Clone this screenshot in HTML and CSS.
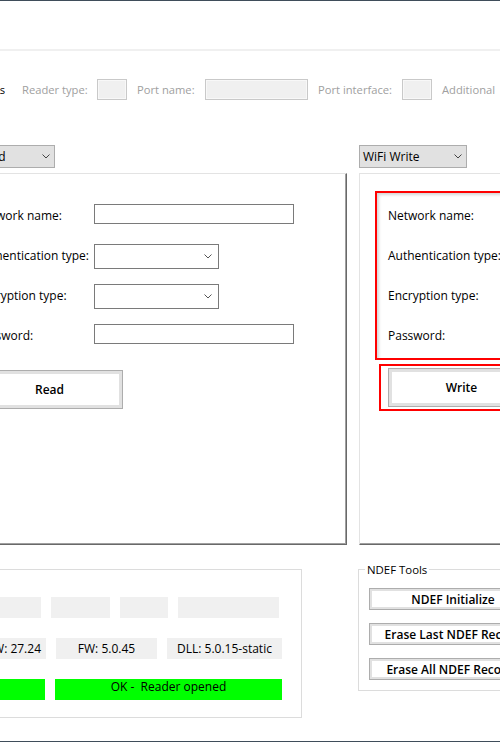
FILE: index.html
```html
<!DOCTYPE html>
<html>
<head>
<meta charset="utf-8">
<title>WiFi NDEF</title>
<link rel="stylesheet" href="styles.css">
</head>
<body>
<div class="window">
  <div class="strip"></div>

  <div class="readerbar">
    <div class="sclip"><span>Readers</span></div>
    <span class="rl rl-type">Reader type:</span><span class="rbox rbox-s"></span>
    <span class="rl rl-port">Port name:</span><span class="rbox rbox-l"></span>
    <span class="rl rl-intf">Port interface:</span><span class="rbox rbox-s"></span>
    <span class="rl">Additional</span>
  </div>

  <div class="main">
    <div class="col">
      <div class="combo"><span>WiFi Read</span><svg class="chev" width="8" height="5" viewBox="0 0 8 5"><path d="M0.5 0.5 L4 4 L7.5 0.5" fill="none" stroke="#444" stroke-width="1"/></svg></div>
      <div class="panel">
        <div class="form">
          <div class="row"><span class="label">Network name:</span><span class="input"></span></div>
          <div class="row"><span class="label">Authentication type:</span><span class="dd"><svg class="chev" width="8" height="5" viewBox="0 0 8 5"><path d="M0.5 0.5 L4 4 L7.5 0.5" fill="none" stroke="#555" stroke-width="1"/></svg></span></div>
          <div class="row"><span class="label">Encryption type:</span><span class="dd"><svg class="chev" width="8" height="5" viewBox="0 0 8 5"><path d="M0.5 0.5 L4 4 L7.5 0.5" fill="none" stroke="#555" stroke-width="1"/></svg></span></div>
          <div class="row"><span class="label">Password:</span><span class="input"></span></div>
        </div>
        <div class="btnwrap btnwrap-read"><button class="bigbtn">Read</button></div>
      </div>
    </div>

    <div class="col">
      <div class="combo"><span>WiFi Write</span><svg class="chev" width="8" height="5" viewBox="0 0 8 5"><path d="M0.5 0.5 L4 4 L7.5 0.5" fill="none" stroke="#444" stroke-width="1"/></svg></div>
      <div class="panel">
        <div class="form annot">
          <div class="row"><span class="label">Network name:</span><span class="input"></span></div>
          <div class="row"><span class="label">Authentication type:</span><span class="dd"></span></div>
          <div class="row"><span class="label">Encryption type:</span><span class="dd"></span></div>
          <div class="row"><span class="label">Password:</span><span class="input"></span></div>
        </div>
        <div class="btnwrap annot"><button class="bigbtn">Write</button></div>
      </div>
    </div>
  </div>

  <div class="bottom">
    <div class="group info">
      <div class="cells">
        <div class="irow r1">
          <span class="cell w80"></span><span class="cell w59"></span><span class="cell w48"></span><span class="cell w101"></span>
        </div>
        <div class="irow r2">
          <span class="cell w80 ralign">HW: 27.24</span><span class="cell w101">FW: 5.0.45</span><span class="cell w115">DLL: 5.0.15-static</span>
        </div>
        <div class="irow r3">
          <span class="cell green w80"></span><span class="cell green w227">OK -  Reader opened</span>
        </div>
      </div>
    </div>

    <fieldset class="group ndef">
      <legend>NDEF Tools</legend>
      <button class="tbtn">NDEF Initialize</button>
      <button class="tbtn">Erase Last NDEF Record</button>
      <button class="tbtn">Erase All NDEF Records</button>
    </fieldset>
  </div>
</div>
</body>
</html>
```

FILE: styles.css
```css
* { box-sizing: border-box; }

html, body {
  margin: 0;
  padding: 0;
}

body {
  width: 500px;
  height: 742px;
  overflow: hidden;
  background: #ffffff;
  font-family: "Open Sans", "Noto Sans", "DejaVu Sans", sans-serif;
  font-size: 12px;
  color: #000000;
}

.window {
  height: 742px;
  border-top: 1px solid #3f4d5a;
  border-bottom: 1px solid #3f4d5a;
  overflow: hidden;
}

.strip {
  height: 50px;
  border-bottom: 2px solid #f0f0f0;
}

/* reader bar */
.readerbar {
  display: flex;
  align-items: center;
  height: 21px;
  margin-top: 28px;
  white-space: nowrap;
  color: #a0a0a0;
  font-size: 11.2px;
}

.sclip {
  width: 5px;
  flex: none;
  overflow: hidden;
  display: flex;
  justify-content: flex-end;
  color: #000000;
  margin-right: 17px;
}

.rl { flex: none; }
.rl-type { width: 75px; }
.rl-port { width: 68px; }
.rl-intf { width: 84px; }

.rbox {
  flex: none;
  height: 21px;
  border: 1px solid #c9c9c9;
  background: #f0f0f0;
  box-shadow: inset 0 0 0 1px #f8f8f8;
  margin-right: 10px;
}
.rbox-s { width: 30px; }
.rbox-l { width: 103px; }

/* main columns */
.main {
  display: flex;
  gap: 12px;
  margin-top: 45px;
  margin-left: -53px;
}

.col {
  width: 400px;
  flex: none;
}

.combo {
  width: 108px;
  height: 23px;
  border: 1px solid #adadad;
  background: #e1e1e1;
  display: flex;
  align-items: center;
  justify-content: space-between;
  padding: 0 4px 0 3px;
  white-space: nowrap;
}

.chev { display: block; flex: none; }

.panel {
  margin-top: 5px;
  height: 372px;
  border: 1px solid;
  border-color: #e3e3e3 #696969 #696969 #e3e3e3;
  box-shadow: inset -1px -1px 0 #a0a0a0;
  padding: 17px 0 0 15px;
}

.form {
  height: 169px;
  border: 2px solid transparent;
  padding: 11px 0 0 11px;
}

.form.annot {
  border-color: #ff0000;
  box-shadow: inset 3px 3px 3px -1px rgba(0, 0, 0, 0.16);
}

.row {
  display: flex;
  align-items: flex-start;
  height: 40px;
}
.row:last-child { height: 20px; }

.label {
  width: 118px;
  flex: none;
  line-height: 24px;
  white-space: nowrap;
}

.input {
  width: 200px;
  height: 20px;
  border: 1px solid #7a7a7a;
  background: #ffffff;
  flex: none;
}

.dd {
  width: 125px;
  height: 25px;
  border: 1px solid #7a7a7a;
  background: #ffffff;
  display: flex;
  align-items: center;
  justify-content: flex-end;
  padding-right: 6px;
  flex: none;
}

.btnwrap {
  margin: 4px 0 0 4px;
  border: 2px solid transparent;
  padding: 2px 7px;
}
.btnwrap-read { padding-top: 4px; padding-bottom: 0; }
.btnwrap.annot {
  border-color: #ff0000;
}

.bigbtn {
  display: block;
  width: 147px;
  height: 39px;
  margin: 0;
  border: 1px solid #adadad;
  background: #ffffff;
  box-shadow: inset 0 0 0 3px #e1e1e1;
  font-family: inherit;
  font-size: 12px;
  font-weight: 600;
  color: #000000;
  padding: 0;
}

/* bottom groups */
.bottom {
  display: flex;
  align-items: flex-start;
  gap: 56px;
  margin-top: 17px;
  margin-left: -53px;
}

.group {
  margin: 0;
  border: 1px solid #dcdcdc;
  min-width: 0;
  flex: none;
}

legend {
  padding: 0 2px;
  height: 15px;
  line-height: 15px;
  font-size: 11.4px;
}

.info {
  width: 355px;
  margin-top: 7px;
  padding: 27px 0 17px 0;
}

.cells {
  display: flex;
  flex-direction: column;
  align-items: flex-end;
}

.irow {
  display: flex;
  gap: 10px;
  height: 21px;
}
.irow + .irow { margin-top: 20px; }
.r1 { margin-right: 22px; }
.r2, .r3 { margin-right: 19px; }

.cell {
  flex: none;
  height: 21px;
  background: #f0f0f0;
  text-align: center;
  line-height: 21px;
  white-space: pre;
  overflow: hidden;
}
.cell.ralign { text-align: right; padding-right: 5px; }
.cell.green { background: #00ff00; line-height: 16px; }

.w48 { width: 48px; }
.w59 { width: 59px; }
.w80 { width: 80px; }
.w101 { width: 101px; }
.w115 { width: 115px; }
.w227 { width: 227px; }

.ndef {
  width: 200px;
  padding: 11px 0 10px 10px;
}
.ndef legend { margin-left: -4px; }

.tbtn {
  display: block;
  width: 168px;
  height: 22px;
  margin: 0;
  padding: 0;
  border: 1px solid #adadad;
  background: #ffffff;
  box-shadow: inset 0 0 0 2px #e1e1e1;
  font-family: inherit;
  font-size: 12px;
  font-weight: 600;
  color: #000000;
  white-space: nowrap;
}
.tbtn + .tbtn { margin-top: 13px; }
```
